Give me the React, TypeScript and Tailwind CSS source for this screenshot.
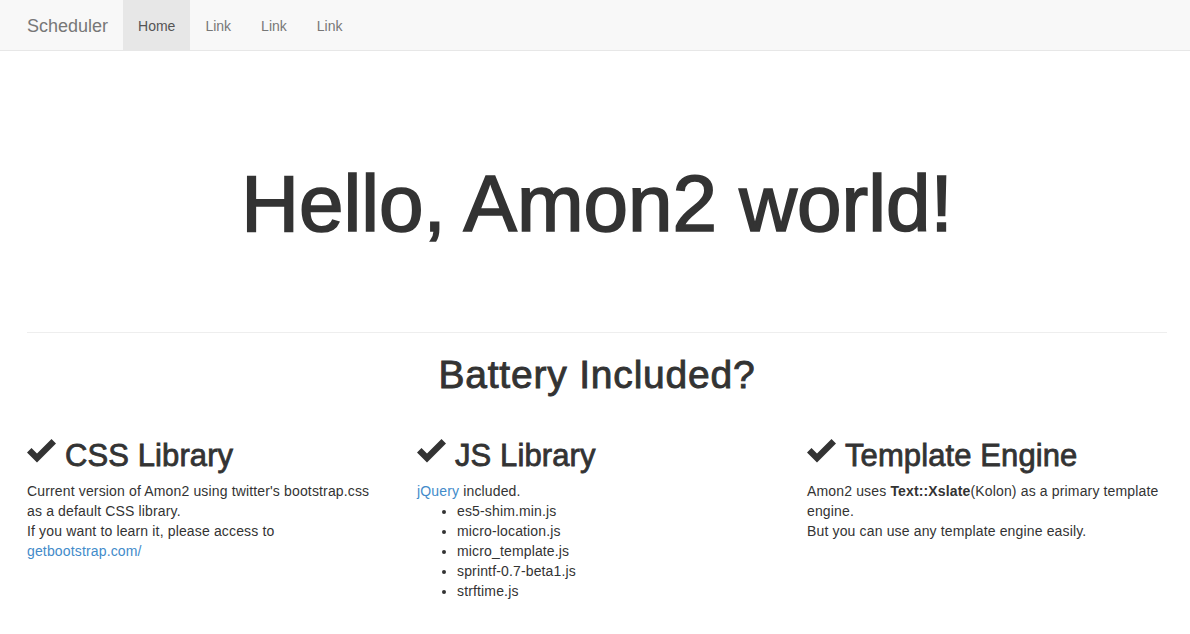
import React from 'react';

const CheckIcon = () => (
  <svg
    width="29"
    height="24"
    viewBox="0 0 29 24"
    className="inline-block mr-[9px] align-[3px] fill-[#333]"
  >
    <polygon points="0,13.5 4.5,9 10,14.5 24.5,0 29,4.5 10,23.5" />
  </svg>
);

const navLinks = ['Link', 'Link', 'Link'];
const jsFiles = [
  'es5-shim.min.js',
  'micro-location.js',
  'micro_template.js',
  'sprintf-0.7-beta1.js',
  'strftime.js',
];

// medium-weight look for the headings
const colHeading = 'text-[31px] leading-[34px] mb-[8px] tracking-[0.1px] [-webkit-text-stroke:0.8px_#333]';

const App = () => {
  return (
    <div className="min-h-screen bg-white text-[#333] text-[14px] leading-[20px] font-['Liberation_Sans',Arial,sans-serif]">
      <nav className="h-[51px] bg-[#f8f8f8] border-b border-[#e7e7e7]">
        <div className="flex h-[50px] pl-[12px]">
          <a className="px-[15px] pt-[16px] pb-[14px] text-[18px] leading-[20px] text-[#777]">Scheduler</a>
          <a className="px-[15px] pt-[16px] pb-[14px] bg-[#e7e7e7] text-[#555]">Home</a>
          {navLinks.map((l, i) => (
            <a key={i} className="px-[15px] pt-[16px] pb-[14px] text-[#777]">
              {l}
            </a>
          ))}
        </div>
      </nav>

      <div className="w-[1140px] ml-[27px]">
        <h1 className="mt-[109px] text-center text-[80px] leading-[88px] [-webkit-text-stroke:1.7px_#333]">
          Hello, Amon2 world!
        </h1>

        <hr className="mt-[84px] border-t border-[#eee]" />

        <h2 className="mt-[20px] text-center text-[39px] leading-[43px] tracking-[0.8px] [-webkit-text-stroke:0.9px_#333]">
          Battery Included?
        </h2>

        <div className="grid grid-cols-3 gap-[30px] mt-[43px]">
          <div>
            <h3 className={colHeading}>
              <CheckIcon />
              CSS Library
            </h3>
            <p className="tracking-[0.15px]">
              Current version of Amon2 using twitter's bootstrap.css
              <br />
              as a default CSS library.
              <br />
              If you want to learn it, please access to
              <br />
              <a className="text-[#428bca]">getbootstrap.com/</a>
            </p>
          </div>

          <div>
            <h3 className={colHeading}>
              <CheckIcon />
              JS Library
            </h3>
            <p className="tracking-[0.15px]">
              <a className="text-[#428bca]">jQuery</a> included.
            </p>
            <ul className="list-disc pl-[40px] tracking-[0.15px]">
              {jsFiles.map((f) => (
                <li key={f}>{f}</li>
              ))}
            </ul>
          </div>

          <div>
            <h3 className={colHeading}>
              <CheckIcon />
              Template Engine
            </h3>
            <p className="tracking-[0.15px]">
              Amon2 uses <strong>Text::Xslate</strong>(Kolon) as a primary template
              <br />
              engine.
              <br />
              But you can use any template engine easily.
            </p>
          </div>
        </div>
      </div>
    </div>
  );
};

export default App;
